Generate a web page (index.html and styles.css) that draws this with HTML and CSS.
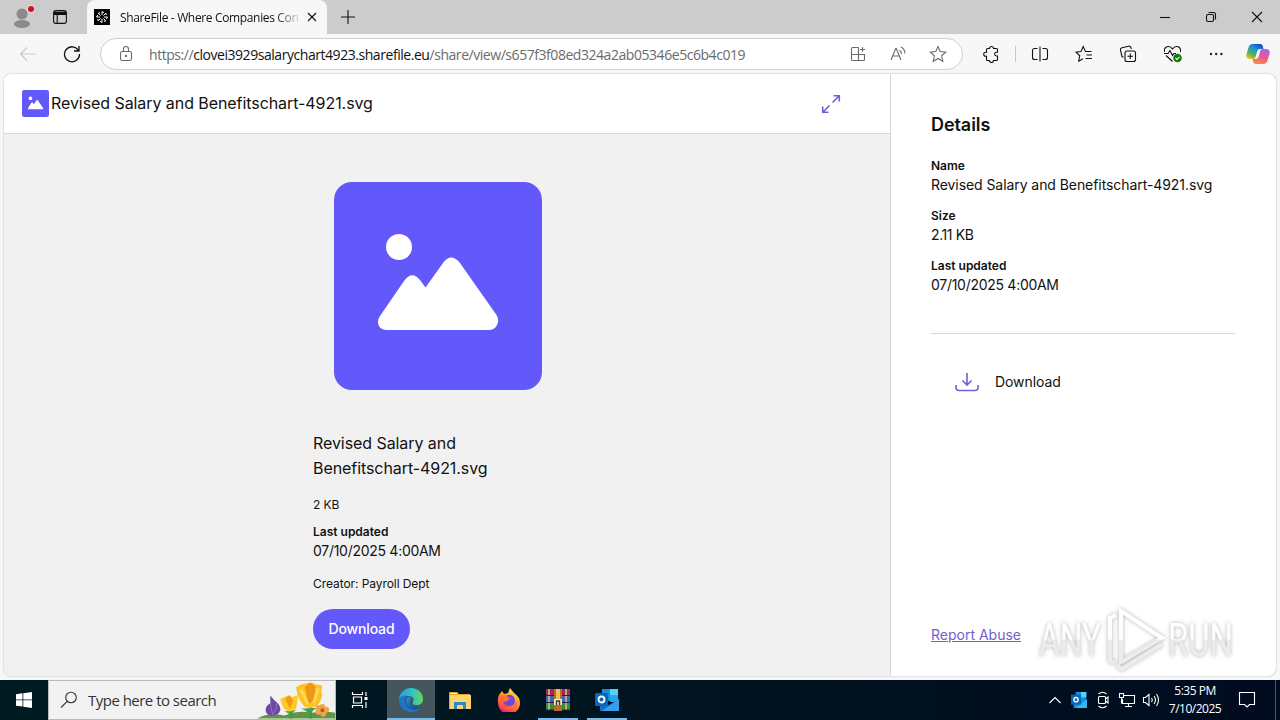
FILE: index.html
```html
<!DOCTYPE html>
<html lang="en">
<head>
  <meta charset="UTF-8" />
  <meta name="viewport" content="width=device-width, initial-scale=1.0"/>
  <title>ShareFile - Where Companies Connect</title>
  <link rel="stylesheet" href="styles.css">
</head>
<body>
  <div class="tabbar">
    <div class="profile">
      <svg width="24" height="24" viewBox="0 0 24 24"><g fill="#8c8988"><circle cx="12" cy="9" r="5.5"/><ellipse cx="12" cy="19" rx="8" ry="4"/></g><circle cx="21" cy="4" r="4" fill="#ddd"/><circle cx="21" cy="4" r="3" fill="#d20f26"/></svg>
    </div>
    <div class="workspaces">
      <svg class="line" width="16" height="16" viewBox="0 0 16 16"><rect x="1.6" y="1.6" width="12.8" height="12.8" rx="2.5"/><path d="M2 3.6h12M2 5h12" stroke-width="1.8"/><path d="M5.2 5v9"/></svg>
    </div>
    <div class="tab">
      <svg width="16" height="16" viewBox="0 0 16 16"><path d="M0 0h16v16H0z"/><g stroke="#fff" stroke-width="1" fill="none"><path d="M8 6V2.5l2 1.2M10 8h3.5l-1.2 2M8 10v3.5l-2-1.2M6 8H2.500l1.200-2M9.400 6.600l2.500-2.500.3 2M9.400 9.400l2.500 2.500-2 .3M6.600 9.400l-2.500 2.500-.3-2M6.600 6.600L4.100 4.100l2-.3"/></g></svg>
      <span class="tab-title">ShareFile - Where Companies Con</span>
      <svg class="line" width="10" height="10" viewBox="0 0 10 10"><path d="M1 1l8 8M9 1l-8 8"/></svg>
    </div>
    <div class="new-tab"><svg class="line" width="14" height="14" viewBox="0 0 14 14"><path d="M7 0v14M0 7h14"/></svg></div>
    <div class="window-buttons">
      <span><svg class="line" width="10" height="10" viewBox="0 0 10 10"><path d="M0 5.500h10"/></svg></span>
      <span><svg class="line" width="12" height="12" viewBox="0 0 12 12"><rect x="1.500" y="3.500" width="7" height="7" rx="1.500"/><path d="M3.500 1.500h5a2 2 0 0 1 2 2v5"/></svg></span>
      <span><svg class="line" width="12" height="12" viewBox="0 0 12 12"><path d="M1 1l10 10M11 1L1 11"/></svg></span>
    </div>
  </div>

  <div class="toolbar">
    <span class="tool faded"><svg class="line" width="18" height="16" viewBox="0 0 18 16"><path d="M17 8H2M8 1.500L1.500 8 8 14.500"/></svg></span>
    <span class="tool"><svg class="line" width="18" height="18" viewBox="0 0 18 18"><path d="M15.500 5.500A7.500 7.500 0 1 0 16.500 9M16 1v5h-5" stroke-width="1.300"/></svg></span>
    <div class="address">
      <svg class="line lock" width="14" height="18" viewBox="0 0 14 18"><rect x="1.500" y="6.500" width="11" height="9" rx="1.800"/><path d="M4.500 6.500V4a2.500 2.500 0 0 1 5 0v2.500"/><circle cx="7" cy="11" r=".6" fill="currentColor"/></svg>
      <span class="url">https://<b>clovei3929salarychart4923.sharefile.eu</b>/share/view/s657f3f08ed324a2ab05346e5c6b4c019</span>
      <span class="address-icon"><svg class="line" width="16" height="16" viewBox="0 0 16 16"><path d="M8.500 1.500h-6a1 1 0 0 0-1 1v11a1 1 0 0 0 1 1h11a1 1 0 0 0 1-1v-5h-13M8.500 1.500v13M12.500 1v5M10 3.500h5"/></svg></span>
      <span class="address-icon"><svg class="line" width="16" height="16" viewBox="0 0 16 16"><path d="M1 14L5.700 2.500h.6L11 14M2.700 10h6.600M9.500 4.200q2 1.200 2 3.800M10.800 1q4.200 2 4 6.500"/></svg></span>
      <span class="address-icon"><svg class="line" width="18" height="18" viewBox="0 0 18 18"><path d="M9 1.500l2.200 5 5.500.6-4.100 3.700 1.200 5.500L9 13.500l-4.800 2.800 1.200-5.500-4.100-3.700 5.500-.6z"/></svg></span>
    </div>
    <span class="tool"><svg class="line" width="18" height="18" viewBox="0 0 18 18"><path d="M5.500 3.500h2a2 2 0 1 1 4 0h3a1 1 0 0 1 1 1v2.700h-1a1.900 1.900 0 0 0 0 3.800h1v3.500a1 1 0 0 1-1 1h-3a2 2 0 1 1-4 0h-2a1 1 0 0 1-1-1v-3.200h-.8a2 2 0 1 1 0-4h.8V4.500a1 1 0 0 1 1-1z"/></svg></span>
    <span class="separator"></span>
    <span class="tool"><svg class="line" width="18" height="18" viewBox="0 0 18 18"><path d="M6.500 3.500h-3a2 2 0 0 0-2 2v7a2 2 0 0 0 2 2h3M11.500 3.500h3a2 2 0 0 1 2 2v7a2 2 0 0 1-2 2h-3M9 1.500v15"/></svg></span>
    <span class="tool"><svg class="line" width="18" height="18" viewBox="0 0 18 18"><path d="M16.500 6.500h-6L8.200 1.600 6 6.500l-5 .7 3.700 3.600-1 5.400L8 13.800M11.500 10H17M10.500 13.500H17"/></svg></span>
    <span class="tool"><svg class="line" width="18" height="18" viewBox="0 0 18 18"><path d="M4.500 12.200L3 11.500 1.400 5a2 2 0 0 1 1.500-2.300l6.600-1.500A2 2 0 0 1 12 2.700l.3 1.300"/><rect x="6" y="6" width="10.500" height="10.500" rx="2"/><path d="M11.250 8.500v5.500M8.500 11.250h5.500"/></svg></span>
    <span class="tool"><svg class="line" width="20" height="18" viewBox="0 0 20 18"><path d="M2.500 7C1.500 3 4.500 1.500 6.500 1.500S9.500 2.500 10.500 4c1-1.500 2-2.500 4-2.500s5 1.500 4 5.500M2 8.500h4l2-3 2.500 5 1.500-2h2M4 10.500l6.500 6"/><circle cx="15.500" cy="13" r="4.300" fill="#107c10" stroke="none"/><path d="M13.500 13l1.500 1.500 2.500-2.700" stroke="#fff"/></svg></span>
    <span class="tool"><svg width="16" height="4" viewBox="0 0 16 4"><g fill="#222"><circle cx="3" cy="2" r="1.200"/><circle cx="8.200" cy="2" r="1.200"/><circle cx="13.400" cy="2" r="1.200"/></g></svg></span>
    <span class="tool copilot">
      <svg width="24" height="22" viewBox="0 0 24 22">
        <defs>
          <linearGradient id="cp1" x1="0.800" y1="0" x2="0.200" y2="1"><stop offset="0" stop-color="#1746b8"/><stop offset=".35" stop-color="#1a91e0"/><stop offset=".7" stop-color="#50b45b"/><stop offset="1" stop-color="#f3c522"/></linearGradient>
          <linearGradient id="cp2" x1="0.700" y1="0" x2="0.300" y2="1"><stop offset="0" stop-color="#a663e6"/><stop offset=".5" stop-color="#eb5891"/><stop offset="1" stop-color="#fb8d43"/></linearGradient>
        </defs>
        <path d="M7 1h7c2 0 2.500 1 3 3l.5 2h-3c-2 0-3 1-3.500 3l-1.500 5c-.5 1.500-1.500 2-3 2H3.500C1 16-.3 14 .5 11L2.700 4C3.300 2 4.500 1 7 1z" fill="url(#cp1)"/>
        <path d="M17 21h-7c-2 0-2.500-1-3-3l-.5-2h2.800c2 0 3-1 3.500-3l1.500-5c.5-1.500 1.500-2 3-2h3.200c2.500 0 3.800 2 3 5l-2.200 7c-.6 2-1.800 3-4.300 3z" fill="url(#cp2)"/>
      </svg>
    </span>
  </div>

  <div class="page">
    <main class="viewer">
      <header class="viewer-header">
        <svg width="27" height="27" viewBox="0 0 208 208"><rect width="208" height="208" rx="18" fill="#6358fa"/><circle cx="65" cy="65" r="14" fill="#fff"/><path d="M53 142L77 103 92 119 117 84 156 142z" fill="#fff" stroke="#fff" stroke-width="14" stroke-linejoin="round"/></svg>
        <h1>Revised Salary and Benefitschart-4921.svg</h1>
        <svg class="expand" width="20" height="20" viewBox="0 0 20 20"><path d="M11.500 8.500L18 2M12.500 1.700h5.800v5.800M8.500 11.500L2 18M1.700 12.500v5.800h5.800"/></svg>
      </header>
      <section class="preview">
        <svg class="thumb" width="208" height="208" viewBox="0 0 208 208">
          <rect width="208" height="208" rx="18" fill="#6358fa"/>
          <circle cx="65" cy="65" r="13" fill="#fff"/>
          <path d="M46 134L70 99Q78 88 86 98L91.500 105.500 109 81Q117 70 126 81L162.500 133Q166 139 162.500 144 160 148 155 148H53Q47 148 45 144 42.500 139 46 134z" fill="#fff"/>
        </svg>
        <div class="info">
          <p class="file-title">Revised Salary and<br>Benefitschart-4921.svg</p>
          <p class="small">2 KB</p>
          <p class="label">Last updated</p>
          <p class="value date">07/10/2025 4:00AM</p>
          <p class="small creator">Creator: Payroll Dept</p>
          <button class="download-btn">Download</button>
        </div>
      </section>
    </main>

    <aside class="details">
      <h2>Details</h2>
      <dl>
        <dt>Name</dt>
        <dd>Revised Salary and Benefitschart-4921.svg</dd>
        <dt>Size</dt>
        <dd class="size">2.11 KB</dd>
        <dt>Last updated</dt>
        <dd class="date">07/10/2025 4:00AM</dd>
      </dl>
      <div class="download-row">
        <svg width="24" height="20" viewBox="0 0 24 20"><path d="M12 1v12M7.500 8.500L12 13l4.500-4.500M1 13v2.500q0 3 3 3h16q3 0 3-3V13"/></svg>
        <span>Download</span>
      </div>
      <a class="report" href="#">Report Abuse</a>
    </aside>
  </div>

  <svg class="watermark" width="212" height="72" viewBox="0 0 212 72">
    <defs>
      <linearGradient id="mark" gradientUnits="userSpaceOnUse" x1="0" y1="10" x2="0" y2="62"><stop offset=".5" stop-color="#fff"/><stop offset=".52" stop-color="#ececec"/></linearGradient>
    </defs>
    <g class="mark-text">
      <text x="6" y="53" textLength="62" lengthAdjust="spacingAndGlyphs">ANY</text>
      <text x="135" y="53" textLength="65" lengthAdjust="spacingAndGlyphs">RUN</text>
    </g>
    <g class="mark-line">
      <path d="M88 8L129 35 88 59z"/>
      <path d="M83 12L77 15V58L82 60M84 63L89 66 129 41"/>
    </g>
  </svg>

  <div class="taskbar">
    <div class="start"><svg width="16" height="16" viewBox="0 0 16 16"><path fill="#fff" d="M0 2.200l6.500-.9v6.200H0zM7.300 1.200L16 0v7.500H7.300zM0 8.300h6.500v6.300L0 13.700zM7.300 8.300H16V16l-8.700-1.200z"/></svg></div>
    <div class="search">
      <svg class="line" width="18" height="18" viewBox="0 0 18 18"><circle cx="11" cy="6.500" r="5.300"/><path d="M7.200 10.300L1 16.500"/></svg>
      <span>Type here to search</span>
      <svg class="flowers" width="78" height="38" viewBox="0 0 80 38">
        <path d="M0 38Q12 31 28 35 42 29 56 32 70 30 80 32V38z" fill="#609546"/>
        <path d="M35 25v13M55 20v18" stroke="#3c983e" stroke-width="3"/>
        <path d="M27 31q6 0 8 6 1-7 7-8M45 28q7 1 9 9 2-9 9-10" fill="#43a04b"/>
        <path d="M14 15Q17 19 22 23 27 30 20 34 12 37 9 31 8 25 14 22z" fill="#6b4aa0"/>
        <path d="M14 15q-1 10 2 19M20 22q1 7-4 12" stroke="#9570c4" fill="none"/>
        <path d="M24 18l4-2 4-2 4 2 6-2-1 9-1 5q-6 5-11 1-4-4-5-11z" fill="#ffc928"/>
        <path d="M29 18l4-4 4 5-3 9z" fill="#f29812"/>
        <path d="M40 6l5-3 5-1 6-1 5 2 6 1-1 7 1 3q-2 8-6 11-6 4-12 1-7-6-9-20z" fill="#fec323"/>
        <path d="M49 6l5-5 6 4-2 15-5 3z" fill="#ec9716"/>
        <path d="M45 8l7 15M63 7l-5 15" stroke="#ffd957" stroke-width="3"/>
        <g fill="#f2a449"><circle cx="67" cy="26" r="3"/><circle cx="71" cy="29" r="3"/><circle cx="68" cy="33" r="3"/><circle cx="63" cy="31" r="3"/><circle cx="63" cy="27" r="3"/></g><circle cx="67" cy="29.500" r="2" fill="#bd571d"/>
      </svg>
    </div>
    <div class="app view"><svg width="18" height="18" viewBox="0 0 18 18"><path d="M1.500 1v2.500h10V1M1.500 17v-2.500h10V17M2.500 6h8v6h-8zM15 1v4M15 11v6" fill="none" stroke="#fff" stroke-width="1.200"/><path fill="#fff" d="M13.500 6h3v3h-3z"/></svg></div>
    <div class="app active">
      <svg width="24" height="24" viewBox="0 0 24 24">
        <defs>
          <linearGradient id="e1" x1="0" y1="0.400" x2="1" y2="0.400"><stop offset="0" stop-color="#269cdc"/><stop offset=".55" stop-color="#30c4c4"/><stop offset="1" stop-color="#64d853"/></linearGradient>
          <linearGradient id="e2" x1="0" y1="0" x2="0.700" y2="1"><stop offset="0" stop-color="#2393dc"/><stop offset="1" stop-color="#124d9b"/></linearGradient>
        </defs>
        <path d="M0 11C1 4 6 0 12 0c7 0 12 5 12 11 0 4-3 6-6 6-4 0-5-1.500-4-3 2-4-1-6-5-6-4 0-7 2-9 5z" fill="url(#e1)"/>
        <path d="M0 11c2-3 5-4 8-3.500C4 11 5 18 10 20.500c4 1.700 8 1 11.500-1.500C19 23 15.500 24 12 24 5 24-.5 18 0 11z" fill="#1b77cc"/>
        <path d="M9 9c-4 4-2 10 3 12 3 1.200 6 .5 9.500-2-3 .8-6 .5-8-1.500-2.500-2-3.500-5-1-7.500C11.500 9 10 8.500 9 9z" fill="url(#e2)"/>
      </svg>
    </div>
    <div class="app"><svg width="22" height="20" viewBox="0 0 22 20"><path d="M0 2h8l2 2h11v15H0z" fill="#e2a52d"/><path d="M1 5h21v14H1z" fill="#fbd66e"/><path d="M2 3h6v1H2z" fill="#fff"/><path d="M5 19v-7h12v7h-3v-4H8v4z" fill="#3286cf"/></svg></div>
    <div class="app">
      <svg width="24" height="24" viewBox="0 0 24 24">
        <defs><linearGradient id="ff" x1="0.800" y1="0" x2="0.300" y2="1"><stop offset="0" stop-color="#fff14f"/><stop offset=".4" stop-color="#ffa42b"/><stop offset=".75" stop-color="#ff5042"/><stop offset="1" stop-color="#e4177d"/></linearGradient></defs>
        <path d="M2 7l3-4 2 3 4-1 2-5 4 5q6 4 6 10a11 11 0 0 1-22 0q-.5-5 1-8z" fill="url(#ff)"/>
        <path d="M10 7q7-1 8 5 0 6-6 6-5 0-6-5 2 1 4 0l2-2-3-2z" fill="#7246d8"/>
        <path d="M3 8q6-3 9 1l2 2-4 1-1 2q-3 0-4-2-1 8 6 8 8 0 8-8l2 2q-1 8-10 8-8-1-9-9z" fill="#ff6837" opacity=".65"/>
      </svg>
    </div>
    <div class="app running">
      <svg width="24" height="22" viewBox="0 0 24 22"><path d="M0 0h24v7H0z" fill="#a6294a"/><path d="M0 7h24v7H0z" fill="#3569b5"/><path d="M0 14h24v7H0z" fill="#3a8a3c"/><path d="M3 0v21M20 0v21" stroke="#e5bd8b" stroke-width="1.500"/><path d="M0 6.500h24M0 13.500h24M0 21h24" stroke="#242139"/><path d="M8 0h8v22H8z" fill="#bc6a2a"/><path d="M10 0h4v10h-4z" fill="#f4bf5a"/><path d="M8 10h8v6H8z" fill="#f5ead9"/><path d="M10.500 16v-4h3v4" stroke="#4b3827" fill="none" stroke-width="1.500"/></svg>
    </div>
    <div class="app running">
      <svg width="24" height="22" viewBox="0 0 24 22"><path d="M7 0h16v12H7z" fill="#1490df"/><path d="M15 0h8v6h-8z" fill="#50d2fb"/><path d="M15 6h8v7h-8z" fill="#28a8ea"/><path d="M5 11l9 5 10-6v12H5z" fill="#1272c1"/><path d="M24 10v12H7z" fill="#35a0ea"/><rect y="4" width="13" height="13" rx="1" fill="#0a65b8"/><circle cx="6.500" cy="10.500" r="3" fill="none" stroke="#fff" stroke-width="1.800"/></svg>
    </div>
    <div class="tray">
      <span><svg class="line" width="14" height="10" viewBox="0 0 14 10"><path d="M1.500 8L7 2.500 12.500 8"/></svg></span>
      <span><svg width="16" height="16" viewBox="0 0 24 24"><path d="M7 0h16v24H4V12l3-2z" fill="#1490df"/><path d="M15 0h8v8h-8z" fill="#50d2fb"/><path d="M24 11v13H7z" fill="#35b8f1"/><rect y="4" width="15" height="15" fill="#0a65b8"/><circle cx="7.500" cy="11.500" r="3.200" fill="none" stroke="#fff" stroke-width="2"/></svg></span>
      <span><svg class="line" width="14" height="18" viewBox="0 0 14 18"><rect x="2.500" y="5.500" width="7" height="7" rx="1"/><path d="M9.500 8l2.500-2v6l-2.500-2M2.500 3Q6.500-.5 10.500 3M2.500 15q4 3.500 8 0"/></svg></span>
      <span><svg class="line" width="18" height="16" viewBox="0 0 18 16"><path d="M6 3.500h10.500v8H4.500V7M10.500 11.500v3M7 14.500h7M1.500 1.500h4v4h-4zM3.500 5.500v6"/></svg></span>
      <span><svg class="line" width="18" height="16" viewBox="0 0 18 16"><path d="M1.500 5.500h2l3.500-3v11l-3.500-3h-2zM9.500 6q1.500 2 0 4M12 4q3 4 0 8M14.500 2q4 6 0 12"/></svg></span>
    </div>
    <div class="clock"><div>5:35 PM</div><div>7/10/2025</div></div>
    <div class="notice"><svg class="line" width="18" height="18" viewBox="0 0 18 18"><path d="M1.500 1.500h15v12h-5L9 16l-2.500-2.500h-5z"/></svg></div>
  </div>
</body>
</html>
```
FILE: styles.css
```css
:root {
  --accent: #6358fa;
  --ui-font: "Open Sans", "Noto Sans", sans-serif;
  --page-font: Inter, "Liberation Sans", sans-serif;
}

* {
  box-sizing: border-box;
}

body {
  margin: 0;
  width: 1280px;
  height: 720px;
  overflow: hidden;
  display: flex;
  flex-direction: column;
  font-family: var(--ui-font);
  background: #f7f7f7;
  color: #111;
  position: relative;
}

h1, h2, p, dl, dd {
  margin: 0;
}

svg {
  display: block;
  flex: none;
}

.line {
  fill: none;
  stroke: currentColor;
  stroke-width: 1.1;
}

/* browser tabs */
.tabbar {
  height: 34px;
  flex: none;
  display: flex;
  background: #ccc;
}

.profile {
  width: 44px;
  padding: 5px 0 0 10px;
}

.workspaces {
  width: 43px;
  padding: 9px 0 0 8px;
}

.tab {
  width: 240px;
  display: flex;
  align-items: center;
  padding: 0 11px 0 7px;
  background: #f7f7f7;
  border-radius: 8px 8px 0 0;
}

.tab-title {
  width: 178px;
  margin: 0 9px 0 10px;
  white-space: nowrap;
  font-size: 12px;
  letter-spacing: -0.35px;
  -webkit-mask-image: linear-gradient(to right, #000 155px, transparent 182px);
  mask-image: linear-gradient(to right, #000 155px, transparent 182px);
}

.new-tab {
  padding: 10px 0 0 14px;
}

.window-buttons {
  margin-left: auto;
  display: flex;
}

.window-buttons span {
  width: 46px;
  display: flex;
  align-items: center;
  justify-content: center;
}

/* browser toolbar */
.toolbar {
  height: 40px;
  flex: none;
  display: flex;
  align-items: center;
  padding-left: 6px;
}

.tool {
  width: 44px;
  display: flex;
  justify-content: center;
}

.faded {
  color: #c9c9c9;
}

.address {
  width: 863px;
  height: 32px;
  margin: 0 6px;
  display: flex;
  align-items: center;
  padding: 0 4px 0 18px;
  border: 1px solid #d0d0d0;
  border-radius: 16px;
  background: #fff;
  color: #6b6b6b;
}

.url {
  flex: 1;
  margin-left: 16px;
  white-space: nowrap;
  font-size: 14px;
  letter-spacing: -0.45px;
}

.url b {
  font-weight: normal;
  color: #111;
}

.address-icon {
  width: 40px;
  display: flex;
  justify-content: center;
}

.separator {
  width: 1px;
  height: 16px;
  margin: 0 2px;
  background: #c9c9c9;
}

.copilot {
  width: 40px;
}

/* file page */
.page {
  height: 602px;
  flex: none;
  margin: 0 4px;
  display: flex;
  overflow: hidden;
  border-radius: 8px;
  background: #fff;
  box-shadow: 0 0 2px #aaa;
  font-family: var(--page-font);
  letter-spacing: -0.07px;
}

.viewer {
  width: 887px;
  display: flex;
  flex-direction: column;
  border-right: 1px solid #d6d6d6;
  background: #f1f1f1;
}

.viewer-header {
  height: 60px;
  display: flex;
  align-items: center;
  padding: 0 49px 0 18px;
  background: #fff;
  border-bottom: 1px solid #d9d9d9;
}

.viewer-header h1 {
  margin-left: 2px;
  padding-bottom: 1px;
  font-size: 16px;
  font-weight: 400;
}

.expand {
  margin-left: auto;
}

.expand, .download-row svg {
  fill: none;
  stroke: #7060d4;
  stroke-width: 1.6;
}

.preview {
  flex: 1;
  padding: 48px 0 0 309px;
}

.thumb {
  margin-left: 21px;
}

.info {
  padding-top: 41px;
}

.file-title {
  font-size: 16px;
  line-height: 25px;
}

.small {
  margin-top: 15px;
  font-size: 12px;
  line-height: 18px;
}

.label, dt {
  font-size: 12px;
  line-height: 18px;
  font-weight: 600;
  letter-spacing: 0;
}

.label {
  margin-top: 9px;
}

.value, dd {
  font-size: 14px;
  line-height: 20px;
}

.date {
  letter-spacing: -0.28px;
}

.size {
  letter-spacing: -0.4px;
}

.creator {
  margin-top: 14px;
}

.download-btn {
  width: 97px;
  height: 40px;
  margin-top: 16px;
  padding: 0 0 1px;
  border: none;
  border-radius: 20px;
  background: var(--accent);
  color: #fff;
  font: 500 14px var(--page-font);
  letter-spacing: -0.15px;
}

.details {
  flex: 1;
  display: flex;
  flex-direction: column;
  padding: 38px 41px 31px 40px;
}

.details h2 {
  font-size: 18px;
  line-height: 26px;
  font-weight: 600;
}

.details dl {
  margin-top: 19px;
  padding-bottom: 38px;
  border-bottom: 1px solid #d6d6d6;
}

.details dd {
  margin-bottom: 12px;
}

.details dd:last-child {
  margin-bottom: 0;
}

.download-row {
  display: flex;
  align-items: center;
  gap: 16px;
  margin: 38px 0 0 24px;
  font-size: 14px;
  line-height: 20px;
}

.report {
  align-self: flex-start;
  margin-top: auto;
  font-size: 14px;
  line-height: 20px;
  letter-spacing: 0;
  color: #7160cf;
}

/* watermark over the page corner */
.watermark {
  position: absolute;
  left: 1033px;
  top: 603px;
  filter: drop-shadow(0 0 2px rgba(0, 0, 0, 0.3));
}

.mark-text {
  font: 47px Roboto, sans-serif;
  fill: url(#mark);
}

.mark-line {
  fill: none;
  stroke: url(#mark);
  stroke-width: 4;
}

/* windows taskbar */
.taskbar {
  height: 40px;
  margin-top: auto;
  display: flex;
  background: linear-gradient(to right, #001b22, #00121e 60%, #000b20);
  color: #fff;
}

.start {
  width: 48px;
  display: flex;
  align-items: center;
  justify-content: center;
}

.search {
  width: 288px;
  display: flex;
  align-items: center;
  padding-left: 11px;
  border: 1px solid #b9b9b9;
  background: #f2f2f2;
  color: #333;
}

.search span {
  margin-left: 10px;
  font-size: 15px;
  letter-spacing: -0.52px;
  white-space: nowrap;
}

.flowers {
  margin-left: auto;
}

.app {
  width: 48px;
  margin-right: 1px;
  display: flex;
  align-items: center;
  justify-content: center;
}

.view {
  width: 50px;
  padding-right: 2px;
}

.active {
  background: #45565d;
  border-bottom: 2px solid #76b9ed;
  padding-top: 2px;
}

.running {
  background: linear-gradient(#76b9ed, #76b9ed) center bottom / 40px 2px no-repeat;
}

.tray {
  margin-left: auto;
  display: flex;
}

.tray span {
  width: 24px;
  display: flex;
  align-items: center;
  justify-content: center;
}

.clock {
  width: 64px;
  padding-top: 2px;
  text-align: center;
  font-size: 12px;
  line-height: 18px;
  letter-spacing: -0.5px;
}

.notice {
  width: 49px;
  margin-right: 4px;
  border-right: 1px solid #51535f;
  display: flex;
  align-items: center;
  padding-left: 11px;
}
```
